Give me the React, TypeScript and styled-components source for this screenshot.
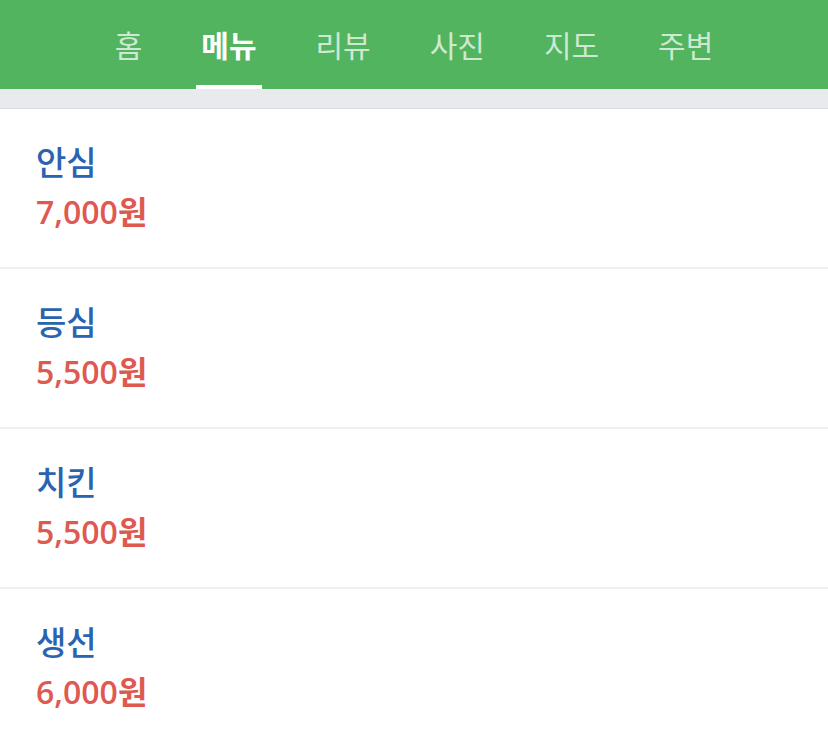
import React from "react";
import styled, { createGlobalStyle } from "styled-components";

const Global = createGlobalStyle`
  html, body { margin: 0; padding: 0; background: #ffffff; }
  body { font-family: "Noto Sans CJK KR", "Noto Sans", sans-serif; }
  * { box-sizing: border-box; }
`;

const Header = styled.nav`
  height: 89px;
  background: #52b45f;
  display: flex;
  justify-content: center;
  align-items: stretch;
  gap: 49px;
`;

const Tab = styled.div<{ $active?: boolean }>`
  display: flex;
  align-items: center;
  padding: 3px 5px 0;
  font-size: 30px;
  font-weight: ${(p) => (p.$active ? 700 : 400)};
  color: ${(p) => (p.$active ? "#ffffff" : "rgba(255,255,255,0.72)")};
  border-bottom: 4px solid ${(p) => (p.$active ? "#ffffff" : "transparent")};
`;

const Band = styled.div`
  height: 20px;
  background: #e9eaed;
  border-bottom: 1px solid #dcdee2;
`;

const Row = styled.div`
  padding: 30px 36px 34px;
  border-bottom: 2px solid #f0f0f0;
  display: flex;
  flex-direction: column;
  gap: 8px;
`;

const Name = styled.div`
  font-size: 33px;
  line-height: 44px;
  color: #2a63b0;
  font-weight: 500;
`;

const Price = styled.div`
  font-family: "Open Sans", "Noto Sans CJK KR", sans-serif;
  font-size: 32px;
  line-height: 42px;
  color: #de5a51;
  font-weight: 600;
`;

const tabs = ["홈", "메뉴", "리뷰", "사진", "지도", "주변"];
const items = [
  { name: "안심", price: "7,000원" },
  { name: "등심", price: "5,500원" },
  { name: "치킨", price: "5,500원" },
  { name: "생선", price: "6,000원" },
];

export default function App() {
  return (
    <>
      <Global />
      <Header>
        {tabs.map((t) => (
          <Tab key={t} $active={t === "메뉴"}>
            {t}
          </Tab>
        ))}
      </Header>
      <Band />
      {items.map((it) => (
        <Row key={it.name}>
          <Name>{it.name}</Name>
          <Price>{it.price}</Price>
        </Row>
      ))}
    </>
  );
}
